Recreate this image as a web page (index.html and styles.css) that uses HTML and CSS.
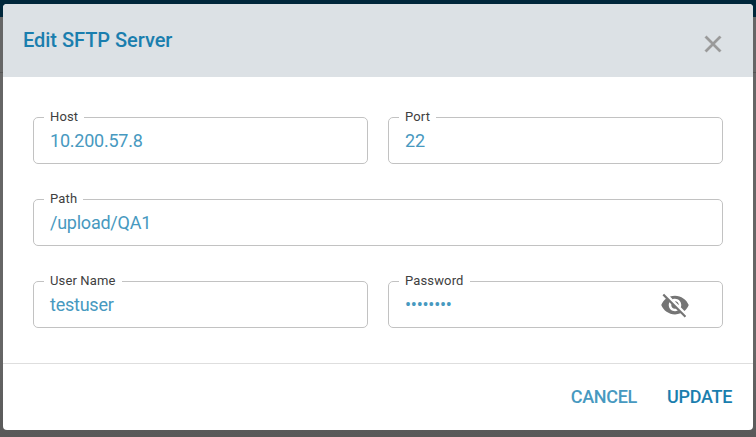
FILE: index.html
```html
<!DOCTYPE html>
<html lang="en">
<head>
<meta charset="utf-8">
<title>Edit SFTP Server</title>
<link rel="stylesheet" href="styles.css">
</head>
<body>
<section class="dialog" role="dialog">
  <header class="header">
    <h1 class="title">Edit SFTP Server</h1>
    <svg class="close" viewBox="0 0 24 24"><path d="M19 6.41 17.59 5 12 10.59 6.41 5 5 6.41 10.59 12 5 17.59 6.41 19 12 13.41 17.59 19 19 17.59 13.41 12z"/></svg>
  </header>
  <div class="form">
    <fieldset class="field"><legend class="label">Host</legend><span class="value">10.200.57.8</span></fieldset>
    <fieldset class="field"><legend class="label">Port</legend><span class="value">22</span></fieldset>
    <fieldset class="field wide"><legend class="label">Path</legend><span class="value">/upload/QA1</span></fieldset>
    <fieldset class="field"><legend class="label">User Name</legend><span class="value">testuser</span></fieldset>
    <fieldset class="field"><legend class="label">Password</legend><div class="row"><span class="value">••••••••</span>
      <svg class="eye" viewBox="0 0 24 24"><path d="M12 7c2.760 0 5 2.240 5 5 0 .65-.13 1.260-.36 1.830l2.920 2.920c1.510-1.260 2.700-2.890 3.430-4.750-1.730-4.390-6-7.500-11-7.500-1.400 0-2.740.25-3.980.7l2.160 2.160C10.740 7.130 11.350 7 12 7zM2 4.270l2.280 2.280.46.46C3.080 8.300 1.780 10.020 1 12c1.730 4.390 6 7.500 11 7.500 1.550 0 3.030-.3 4.380-.84l.42.42L19.730 22 21 20.730 3.270 3 2 4.270zM7.530 9.800l1.550 1.550c-.05.21-.08.43-.08.65 0 1.660 1.340 3 3 3 .22 0 .44-.03.65-.08l1.550 1.550c-.67.33-1.410.53-2.200.53-2.760 0-5-2.240-5-5 0-.79.2-1.530.53-2.200zm4.310-.78 3.150 3.150.02-.16c0-1.660-1.340-3-3-3l-.17.01z"/></svg></div></fieldset>
  </div>
  <footer class="footer">
    <span class="action muted">CANCEL</span>
    <span class="action">UPDATE</span>
  </footer>
</section>
</body>
</html>
```

FILE: styles.css
```css
* { box-sizing: border-box; }
body {
  margin: 0;
  height: 437px;
  padding: 4px 3px 7px;
  overflow: hidden;
  font-family: Roboto, sans-serif;
  background: linear-gradient(#00273b 0 17px, #666 17px 72px, #555 72px 73px, #666 73px 350px, #595959 437px);
}
.dialog {
  height: 426px;
  display: flex;
  flex-direction: column;
  border-radius: 4px;
  overflow: hidden;
  background: #fff;
}
.header {
  height: 73px;
  padding: 0 26px 0 20px;
  display: flex;
  align-items: center;
  justify-content: space-between;
  background: #dce1e5;
}
.title {
  margin: 0 0 2px;
  font-size: 20px;
  line-height: 24px;
  font-weight: 500;
  letter-spacing: -.04px;
  color: #1a7eae;
}
.close { width: 28px; height: 28px; margin-top: 7px; fill: #999; stroke: #999; stroke-width: .35; }
.form {
  flex: 1;
  display: grid;
  grid-template-columns: 335px 335px;
  grid-auto-rows: 54px;
  gap: 28px 20px;
  padding: 33px 30px 0;
}
.field {
  min-width: 0;
  margin: 0;
  height: 54px;
  padding: 0 16px 0 10px;
  border: 1px solid #c2c2c2;
  border-radius: 5px;
}
.wide { grid-column: span 2; }
.label {
  height: 15px;
  padding: 0 6px;
  font-size: 13px;
  line-height: 13px;
  letter-spacing: .14px;
  color: #404040;
}
.value {
  display: block;
  padding: 4px 0 0 6px;
  font-size: 18px;
  line-height: 24px;
  letter-spacing: -.24px;
  color: #4799c0;
}
.row { display: flex; align-items: flex-start; justify-content: space-between; }
.eye { width: 30px; height: 30px; margin: 1px 16px 0 0; fill: #757575; }
.footer {
  height: 67px;
  padding-right: 21px;
  display: flex;
  align-items: center;
  justify-content: flex-end;
  gap: 30px;
  border-top: 1px solid #dedede;
}
.action { font-size: 18px; line-height: 24px; font-weight: 500; letter-spacing: -.3px; color: #1a7eae; }
.muted { color: #4799c0; }
```
